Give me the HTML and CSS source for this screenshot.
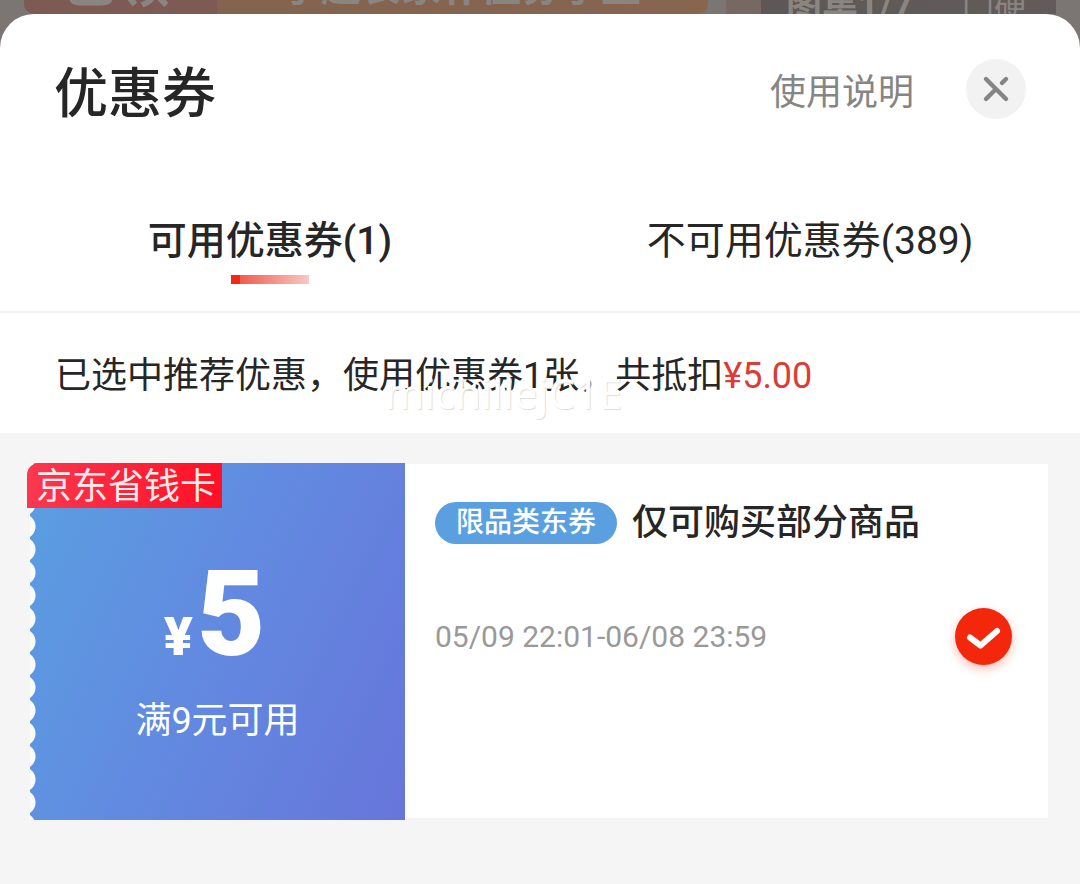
FILE: index.html
```html
<!DOCTYPE html>
<html lang="zh-CN">

<head>
    <meta charset="UTF-8">
    <meta name="viewport" content="width=device-width, initial-scale=1.0">
    <title>优惠券</title>
    <link rel="stylesheet" href="styles.css">
</head>

<body>
    <div class="page-behind">
        <div class="promo">
            <span class="promo-tag">已领</span>
            <span class="promo-text">享超长家补值券享至</span>
        </div>
        <div class="gallery">
            <span class="gallery-num">图集1/7</span>
            <span class="gallery-name">门硬</span>
        </div>
    </div>
    <div class="sheet">
        <div class="sheet-header">
            <h1 class="sheet-title">优惠券</h1>
            <a class="help-link" href="#">使用说明</a>
            <button class="btn-close" aria-label="关闭">
                <svg width="60" height="60" viewBox="0 0 60 60" fill="none" stroke="#858585" stroke-width="4.4" stroke-linecap="round">
                    <path d="M20 20L40 40M20 40L30 30M36 24L40 20" />
                </svg>
            </button>
        </div>
        <div class="tabs" role="tablist">
            <button class="tab tab-active" role="tab" aria-selected="true">可用优惠券(1)</button>
            <button class="tab" role="tab" aria-selected="false">不可用优惠券(389)</button>
        </div>
        <div class="summary">
            <p class="summary-text">已选中推荐优惠，使用优惠券1张，共抵扣<span class="summary-price">¥5.00</span></p>
            <span class="watermark">michillejC1E</span>
        </div>
        <div class="coupon-list">
            <label class="coupon">
                <span class="coupon-left">
                    <span class="coupon-ribbon">京东省钱卡</span>
                    <span class="coupon-amount"><span class="coupon-unit">¥</span>5</span>
                    <span class="coupon-limit">满9元可用</span>
                </span>
                <span class="coupon-right">
                    <span class="coupon-name"><span class="coupon-badge">限品类东券</span>仅可购买部分商品</span>
                    <span class="coupon-bottom">
                        <span class="coupon-date">05/09 22:01-06/08 23:59</span>
                        <span class="check">
                            <input class="check-input" type="checkbox" checked>
                            <svg class="check-icon" viewBox="0 0 57 57" fill="none" stroke="#fff" stroke-width="6" stroke-linecap="round" stroke-linejoin="round">
                                <path d="M15 29.5L25.5 37.5L42 23" />
                            </svg>
                        </span>
                    </span>
                </span>
            </label>
        </div>
    </div>
</body>

</html>
```
FILE: styles.css
```css
* {
    margin: 0;
    padding: 0;
    box-sizing: border-box;
}

body {
    min-height: 100vh;
    display: flex;
    flex-direction: column;
    background-color: #7b7674;
    font-family: Roboto, "Noto Sans CJK SC", sans-serif;
    color: #262626;
}

button {
    border: none;
    background: none;
    font-family: inherit;
    color: inherit;
    cursor: pointer;
}

/* dimmed product page above the sheet */
.page-behind {
    height: 48px;
    margin-bottom: -34px;
    padding: 0 24px;
    display: grid;
    grid-template-columns: 684fr 330fr;
    gap: 18px;
    overflow: hidden;
    white-space: nowrap;
    color: #8b8582;
}

.promo {
    min-width: 0;
    height: 14px;
    display: flex;
    align-items: flex-end;
    border-radius: 0 0 10px 10px;
    background: linear-gradient(to right, #7e5a54 193px, #82644f 193px, #87654f);
    overflow: hidden;
    font-size: 40px;
    font-weight: bold;
    line-height: 40px;
}

.promo-tag {
    flex: none;
    width: 193px;
    padding: 0 0 10px 38px;
    font-size: 54px;
}

.promo-text {
    padding: 0 0 6px 64px;
}

.gallery {
    min-width: 0;
    height: 14px;
    display: flex;
    align-items: flex-start;
    justify-content: space-between;
    padding: 0 30px 0 60px;
    background: linear-gradient(to right, #776864 35px, #5d5856 35px, #625b59);
    overflow: hidden;
    font-size: 36px;
    line-height: 14px;
}

.gallery-num {
    font-weight: bold;
}

.gallery-name {
    font-size: 32px;
}

.sheet {
    position: relative;
    flex: 1;
    display: flex;
    flex-direction: column;
    border-radius: 34px 34px 0 0;
    background-color: #fff;
    overflow: hidden;
}

.sheet-header {
    display: flex;
    align-items: center;
    height: 150px;
    padding: 0 54px;
}

.sheet-title {
    flex: 1;
    font-size: 54px;
    font-weight: 500;
}

.help-link {
    margin-right: 52px;
    font-size: 36px;
    color: #858585;
    text-decoration: none;
}

.btn-close {
    width: 60px;
    height: 60px;
    border-radius: 50%;
    background-color: #f2f2f2;
}

.btn-close svg {
    display: block;
}

.tabs {
    display: flex;
    height: 149px;
    border-bottom: 2px solid #f2f2f2;
}

.tab {
    position: relative;
    flex: 1;
    padding-bottom: 2px;
    font-size: 39px;
}

.tab-active {
    font-weight: 500;
}

.tab-active::after {
    content: "";
    position: absolute;
    left: 50%;
    bottom: 27px;
    width: 78px;
    height: 9px;
    margin-left: -39px;
    background: linear-gradient(to right, #ee2a17 9px, #ef5c4e 9px, #fac8c4);
}

.summary {
    position: relative;
    display: flex;
    align-items: center;
    height: 120px;
    padding: 0 55px 2px;
}

.summary-text {
    font-size: 36px;
}

.summary-price {
    color: #dc3c37;
}

.watermark {
    position: absolute;
    left: 385px;
    bottom: 14px;
    font-family: "Noto Sans", sans-serif;
    font-size: 42px;
    line-height: 52px;
    color: #fff;
    text-shadow: 1px 1px 1px #ddd;
}

.coupon-list {
    flex: 1;
    padding: 30px 32px 30px 30px;
    background-color: #f5f5f5;
}

.coupon {
    display: flex;
    height: 357px;
}

.coupon-left {
    position: relative;
    flex: none;
    display: flex;
    flex-direction: column;
    align-items: center;
    width: 375px;
    padding-top: 94px;
    /* torn edge on the left, then the blue */
    background: radial-gradient(circle at -7px 50%, #fafafa 12px, transparent 13px) 0 6px / 8px 23px repeat-y,
        linear-gradient(115deg, #5a9fe0, #6289e0 50%, #6775da);
    color: #fff;
}

.coupon-ribbon {
    position: absolute;
    top: 0;
    left: -3px;
    height: 45px;
    padding: 0 6px 0 9px;
    border-radius: 12px 0 0 0;
    background: linear-gradient(to right, #f9384f, #ff1026);
    font-size: 36px;
    line-height: 48px;
    color: #ffe9ea;
}

.coupon-amount {
    padding-right: 6px;
    font-size: 118px;
    font-weight: 900;
    line-height: 116px;
}

.coupon-unit {
    margin-right: 4px;
    font-size: 54px;
}

.coupon-limit {
    font-size: 36px;
    line-height: 52px;
}

.coupon-right {
    flex: 1;
    display: flex;
    flex-direction: column;
    margin: 1px 0 2px;
    padding: 33px 36px 0 30px;
    background-color: #fff;
}

.coupon-name {
    display: flex;
    align-items: center;
    gap: 15px;
    font-size: 36px;
    font-weight: 500;
    line-height: 52px;
}

.coupon-badge {
    padding: 0 21px;
    border-radius: 21px;
    background-color: #5a9fe0;
    color: #fff;
    font-size: 28px;
    line-height: 42px;
}

.coupon-bottom {
    display: flex;
    align-items: center;
    justify-content: space-between;
    margin-top: 59px;
}

.coupon-date {
    font-size: 30px;
    color: #999;
}

.check {
    position: relative;
    width: 57px;
    height: 57px;
}

.check-input {
    appearance: none;
    display: block;
    width: 57px;
    height: 57px;
    border: 2px solid #ccc;
    border-radius: 50%;
}

.check-input:checked {
    border: none;
    background-color: #f2270c;
    box-shadow: 0 4px 10px rgba(242, 39, 12, 0.3);
}

.check-icon {
    position: absolute;
    top: 0;
    left: 0;
    width: 57px;
    height: 57px;
    pointer-events: none;
}
```
